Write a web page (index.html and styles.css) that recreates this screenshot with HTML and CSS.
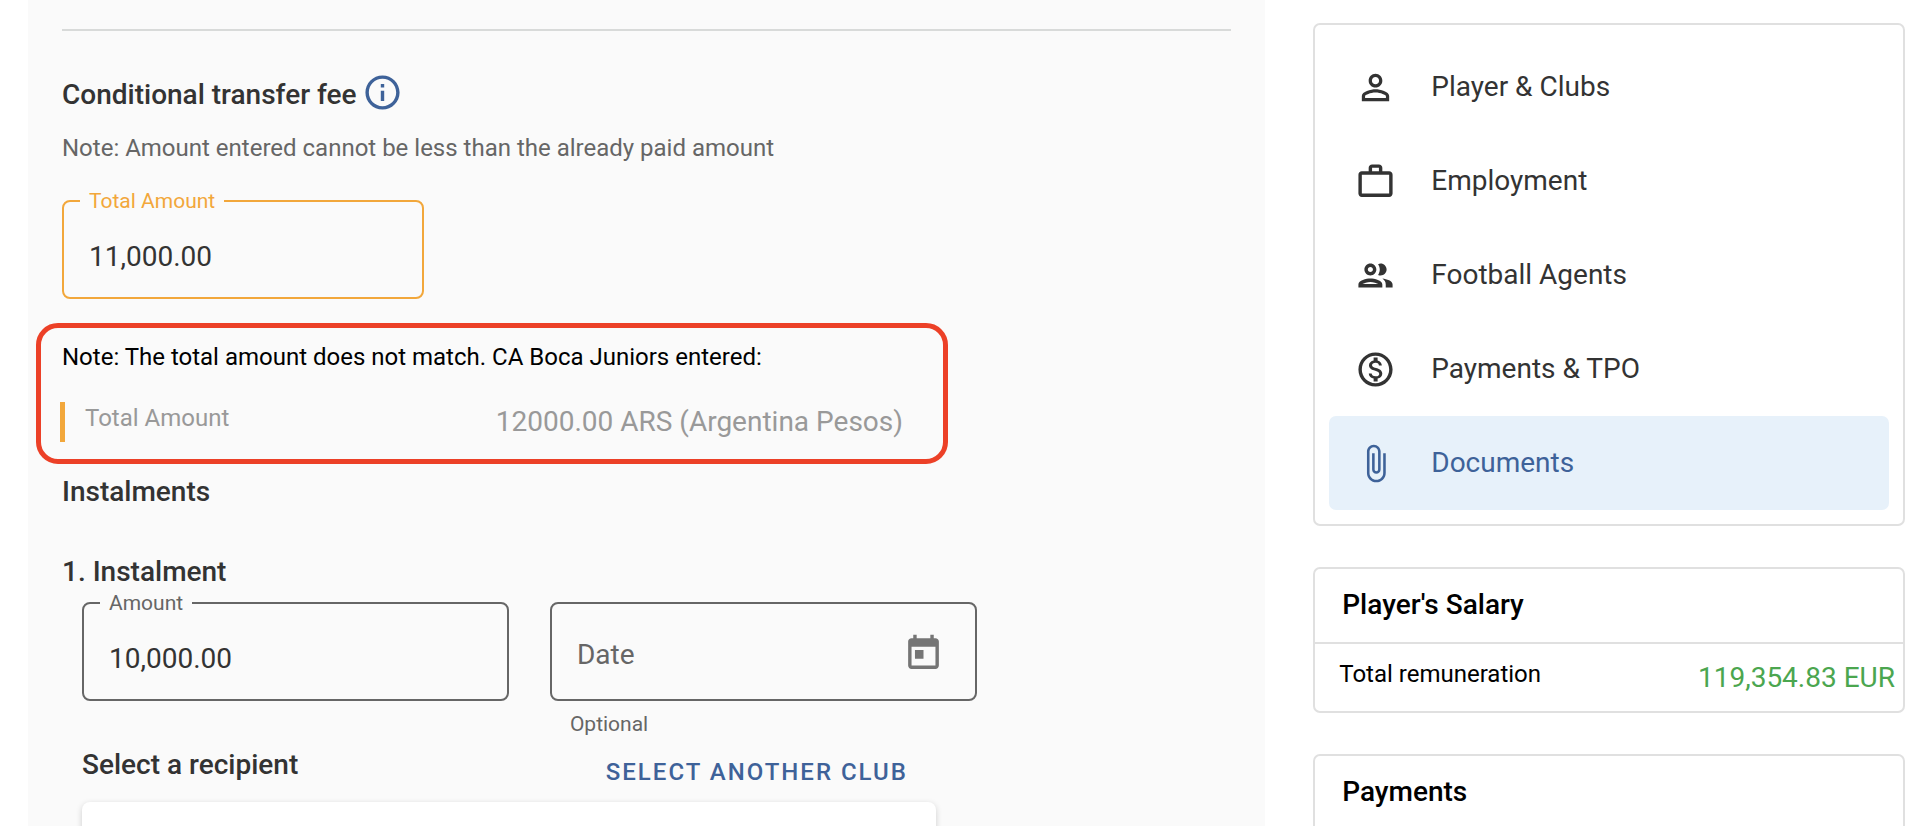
FILE: index.html
```html
<!DOCTYPE html>
<html lang="en">

<head>
    <meta charset="utf-8">
    <title>Transfer - Conditional fee</title>
    <link rel="stylesheet" href="styles.css">
</head>

<body>
    <main class="panel">
        <hr class="divider">

        <div class="heading-row">
            <h2 class="heading">Conditional transfer fee</h2>
            <svg class="icon info" viewBox="0 0 24 24" role="img" aria-label="Info">
                <path d="M11 7h2v2h-2zm0 4h2v6h-2zm1-9C6.48 2 2 6.48 2 12s4.48 10 10 10 10-4.48 10-10S17.52 2 12 2zm0 18c-4.41 0-8-3.59-8-8s3.59-8 8-8 8 3.59 8 8-3.59 8-8 8z"/>
            </svg>
        </div>
        <p class="note">Note: Amount entered cannot be less than the already paid amount</p>

        <fieldset class="field warning total-field">
            <legend><label for="total">Total Amount</label></legend>
            <input id="total" type="text" value="11,000.00">
        </fieldset>

        <div class="mismatch">
            <p class="mismatch-note">Note: The total amount does not match. CA Boca Juniors entered:</p>
            <div class="mismatch-row">
                <span class="mismatch-label">Total Amount</span>
                <span class="mismatch-value">12000.00 ARS (Argentina Pesos)</span>
            </div>
        </div>

        <h3 class="heading instalments-title">Instalments</h3>
        <h4 class="heading instalment-title">1. Instalment</h4>

        <section class="instalment">
            <div class="field-row">
                <fieldset class="field">
                    <legend><label for="amount">Amount</label></legend>
                    <input id="amount" type="text" value="10,000.00">
                </fieldset>
                <div class="date-col">
                    <div class="field date-field">
                        <input id="date" type="text" placeholder="Date" aria-label="Date">
                        <button class="icon-button" type="button" aria-label="Open calendar">
                            <svg class="icon" viewBox="0 0 24 24">
                                <path d="M19 3h-1V1h-2v2H8V1H6v2H5c-1.11 0-1.99.9-1.99 2L3 19c0 1.1.89 2 2 2h14c1.1 0 2-.9 2-2V5c0-1.1-.9-2-2-2zm0 16H5V8h14v11zM7 10h5v5H7z"/>
                            </svg>
                        </button>
                    </div>
                    <div class="hint">Optional</div>
                </div>
            </div>

            <div class="recipient-row">
                <h4 class="heading">Select a recipient</h4>
                <button class="text-button" type="button">Select another club</button>
            </div>
            <div class="recipient-card"></div>
        </section>
    </main>

    <aside class="sidebar">
        <nav class="card menu">
            <a class="menu-item" href="#player">
                <svg class="icon" viewBox="0 0 24 24">
                    <path d="M12 5.9c1.16 0 2.1.94 2.1 2.1s-.94 2.1-2.1 2.1S9.9 9.16 9.9 8s.94-2.1 2.1-2.1m0 9c2.97 0 6.1 1.46 6.1 2.1v1.1H5.9V17c0-.64 3.13-2.1 6.1-2.1M12 4C9.79 4 8 5.79 8 8s1.79 4 4 4 4-1.79 4-4-1.79-4-4-4zm0 9c-2.67 0-8 1.34-8 4v3h16v-3c0-2.66-5.33-4-8-4z"/>
                </svg>
                Player &amp; Clubs
            </a>
            <a class="menu-item" href="#employment">
                <svg class="icon" viewBox="0 0 24 24">
                    <path d="M14 6V4h-4v2h4zM4 8v11h16V8H4zm16-2c1.11 0 2 .89 2 2v11c0 1.11-.89 2-2 2H4c-1.11 0-2-.89-2-2l.01-11c0-1.11.88-2 1.99-2h4V4c0-1.11.89-2 2-2h4c1.11 0 2 .89 2 2v2h4z"/>
                </svg>
                Employment
            </a>
            <a class="menu-item" href="#agents">
                <svg class="icon" viewBox="0 0 24 24">
                    <path d="M9 13.75c-2.34 0-7 1.17-7 3.5V19h14v-1.75c0-2.33-4.66-3.5-7-3.5zM4.34 17c.84-.58 2.87-1.25 4.66-1.25s3.82.67 4.66 1.25H4.34zM9 12c1.93 0 3.5-1.57 3.5-3.5S10.93 5 9 5 5.5 6.57 5.5 8.5 7.07 12 9 12zm0-5c.83 0 1.5.67 1.5 1.5S9.83 10 9 10s-1.5-.67-1.5-1.5S8.17 7 9 7zm7.04 6.81c1.16.84 1.96 1.96 1.96 3.44V19h4v-1.75c0-2.02-3.5-3.17-5.96-3.44zM15 12c1.93 0 3.5-1.57 3.5-3.5S16.93 5 15 5c-.54 0-1.04.13-1.5.35.63.89 1 1.98 1 3.15s-.37 2.26-1 3.15c.46.22.96.35 1.5.35z"/>
                </svg>
                Football Agents
            </a>
            <a class="menu-item" href="#payments">
                <svg class="icon" viewBox="0 0 24 24">
                    <path d="M12 2C6.48 2 2 6.48 2 12s4.48 10 10 10 10-4.48 10-10S17.52 2 12 2zm0 18c-4.41 0-8-3.59-8-8s3.59-8 8-8 8 3.59 8 8-3.59 8-8 8zm.31-8.86c-1.77-.45-2.34-.94-2.34-1.67 0-.84.79-1.43 2.1-1.43 1.38 0 1.9.66 1.94 1.64h1.71c-.05-1.34-.87-2.57-2.49-2.97V5H10.9v1.69c-1.51.32-2.72 1.3-2.72 2.81 0 1.79 1.49 2.69 3.66 3.21 1.95.46 2.34 1.15 2.34 1.87 0 .53-.39 1.39-2.1 1.39-1.6 0-2.23-.72-2.32-1.64H8.04c.1 1.7 1.36 2.66 2.86 2.97V19h2.34v-1.67c1.52-.29 2.72-1.16 2.73-2.77-.01-2.2-1.9-2.96-3.66-3.42z"/>
                </svg>
                Payments &amp; TPO
            </a>
            <a class="menu-item active" href="#documents">
                <svg class="icon" viewBox="0 0 24 24">
                    <path d="M16.5 6v11.5c0 2.21-1.79 4-4 4s-4-1.79-4-4V5c0-1.38 1.12-2.5 2.5-2.5s2.5 1.12 2.5 2.5v10.5c0 .55-.45 1-1 1s-1-.45-1-1V6H10v9.5c0 1.38 1.12 2.5 2.5 2.5s2.5-1.12 2.5-2.5V5c0-2.21-1.79-4-4-4S7 2.79 7 5v12.5c0 3.04 2.46 5.5 5.5 5.5s5.5-2.46 5.5-5.5V6h-1.5z"/>
                </svg>
                Documents
            </a>
        </nav>

        <section class="card">
            <h3 class="card-title">Player's Salary</h3>
            <div class="card-row">
                <span>Total remuneration</span>
                <span class="money">119,354.83 EUR</span>
            </div>
        </section>

        <section class="card">
            <h3 class="card-title">Payments</h3>
            <div class="card-row"></div>
        </section>
    </aside>
</body>

</html>
```

FILE: styles.css
```css
* {
    box-sizing: border-box;
}

body {
    margin: 0;
    padding: 0 27px 0 28px;
    height: 100vh;
    overflow: hidden;

    display: grid;
    grid-template-columns: 23fr 11fr;
    gap: 48px;

    font-family: Roboto, "Liberation Sans", sans-serif;
    font-size: 24px;
    line-height: 32px;
    color: #333;
    background-color: #fff;
}

h2, h3, h4, p {
    margin: 0;
}

.icon {
    width: 41px;
    height: 41px;
    flex: none;
    display: block;
    fill: currentColor;
}

/* main panel */

.panel {
    padding: 29px 34px 0;
    background-color: #fafafa;
}

.divider {
    margin: 0;
    border: 0;
    border-top: 2px solid #d8dad9;
}

.heading {
    font-size: 28px;
    font-weight: 500;
    line-height: 32px;
}

.heading-row {
    margin-top: 41px;
    display: flex;
    gap: 5px;
}

.heading-row .heading {
    line-height: 46px;
}

.info {
    color: #3e6299;
}

.note {
    margin-top: 14px;
    color: #666;
}

/* outlined inputs */

.field {
    min-width: 0;
    margin: 0;
    padding: 0;
    border: 2px solid #666;
    border-radius: 8px;
    color: #666;
}

.field legend {
    margin-left: 16px;
    padding: 0 9px;
    font-size: 21px;
    line-height: 24px;
}

.field label {
    display: block;
}

.field input {
    display: block;
    width: 100%;
    height: 84px;
    padding: 2px 25px 0;
    border: 0;
    outline: 0;
    background: none;
    font: inherit;
    font-size: 28px;
    color: #333;
}

.field input::placeholder {
    color: #666;
    opacity: 1;
}

.warning {
    border-color: #f2a73b;
    color: #f2a73b;
}

.total-field {
    width: 31%;
    margin-top: 25px;
}

/* what the other club entered */

.mismatch {
    width: 78%;
    margin: 24px 0 0 -26px;
    padding: 13px 40px 17px 19px;
    border: 5px solid #ec4027;
    border-radius: 22px;
}

.mismatch-note {
    margin-left: 2px;
    color: #000;
}

.mismatch-row {
    margin-top: 29px;
    padding-left: 20px;
    border-left: 5px solid #f2a73b;
    display: flex;
    justify-content: space-between;
    color: #999;
}

.mismatch-value {
    font-size: 28px;
    line-height: 40px;
}

/* instalments */

.instalments-title {
    margin-top: 12px;
}

.instalment-title {
    margin-top: 48px;
}

.instalment {
    margin: 3px 0 0 20px;
}

.field-row {
    display: grid;
    grid-template-columns: 2fr 2fr 1fr;
    align-items: start;
    gap: 41px;
}

.date-col {
    padding-top: 11px;
}

.date-field {
    display: flex;
    align-items: center;
    padding: 4px 31px 0 0;
}

.date-field input {
    flex: 1;
    min-width: 0;
    height: 91px;
}

.icon-button {
    padding: 0;
    border: 0;
    background: none;
    color: #757575;
    cursor: pointer;
}

.hint {
    margin-top: 11px;
    padding-left: 20px;
    font-size: 21px;
    line-height: 24px;
    color: #666;
}

.recipient-row {
    width: calc(75% - 8px);
    margin-top: 13px;
    padding-right: 28px;
    display: flex;
    justify-content: space-between;
}

.text-button {
    height: 46px;
    padding: 0;
    border: 0;
    background: none;
    font: inherit;
    font-weight: 500;
    letter-spacing: 2px;
    text-transform: uppercase;
    color: #3e6299;
    cursor: pointer;
}

.recipient-card {
    width: calc(75% - 8px);
    height: 120px;
    margin-top: 7px;
    border-radius: 8px;
    background-color: #fff;
    box-shadow: 0 2px 6px rgba(0, 0, 0, .18);
}

/* sidebar */

.sidebar {
    padding-top: 23px;
    display: flex;
    flex-direction: column;
    gap: 41px;
}

.card {
    border: 2px solid #e0e0e0;
    border-radius: 7px;
    color: #000;
}

.menu {
    padding: 15px 14px 14px;
}

.menu-item {
    height: 94px;
    padding: 0 26px;
    border-radius: 7px;
    display: flex;
    align-items: center;
    gap: 35px;
    font-size: 28px;
    color: #333;
    text-decoration: none;
}

.menu-item.active {
    background-color: #e7f1fa;
    color: #3e6299;
}

.card-title {
    padding: 20px 27px 21px;
    border-bottom: 2px solid #e0e0e0;
    font-size: 28px;
    font-weight: 500;
}

.card-row {
    min-height: 67px;
    padding: 14px 8px 13px 24px;
    display: flex;
    justify-content: space-between;
}

.money {
    font-size: 28px;
    line-height: 40px;
    color: #4ba64f;
}
```
